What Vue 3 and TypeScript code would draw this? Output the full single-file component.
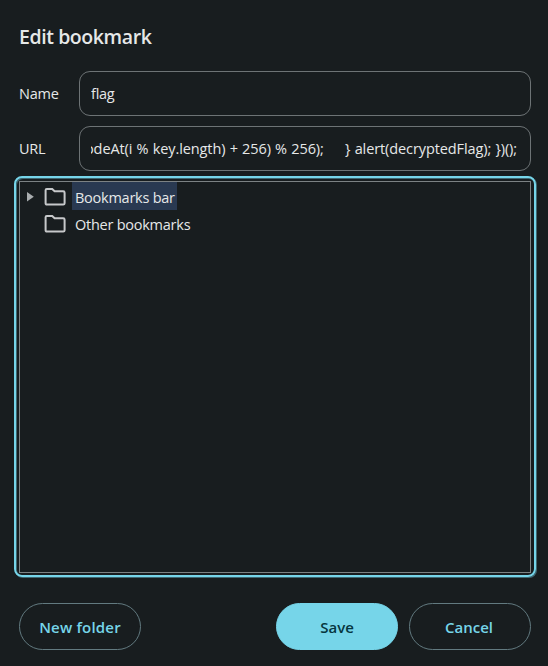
<script setup lang="ts">
import { ref } from 'vue'

interface Folder {
  title: string
  expandable: boolean
}

const name = ref('flag')
const url = ref('codeAt(i % key.length) + 256) % 256);     } alert(decryptedFlag); })();')
const selected = ref(0)
const folders: Folder[] = [
  { title: 'Bookmarks bar', expandable: true },
  { title: 'Other bookmarks', expandable: false },
]
</script>

<template>
  <main class="dialog">
    <h1 class="title">Edit bookmark</h1>
    <div class="row">
      <span class="label">Name</span>
      <div class="field"><div class="clip"><span>{{ name }}</span></div></div>
    </div>
    <div class="row">
      <span class="label">URL</span>
      <div class="field"><div class="clip end"><span class="url-value">{{ url }}</span></div></div>
    </div>
    <div class="tree">
      <div v-for="(folder, i) in folders" :key="folder.title" class="node" @click="selected = i">
        <svg class="arrow" viewBox="0 0 8 12"><path v-if="folder.expandable" d="M1 1 7.8 5.8 1 10.6z" /></svg>
        <svg class="folder" viewBox="0 0 22 18">
          <path d="M2.8 1H8.2L10.6 3.3H19.2Q20.6 3.3 20.6 4.7V15.2Q20.6 16.6 19.2 16.6H3Q1.6 16.6 1.6 15.2V2.3Q1.6 1 2.8 1Z" />
        </svg>
        <span class="node-title" :class="{ selected: selected === i }">{{ folder.title }}</span>
      </div>
    </div>
    <div class="actions">
      <button class="button new">New folder</button>
      <button class="button primary">Save</button>
      <button class="button cancel">Cancel</button>
    </div>
  </main>
</template>

<style>
body {
  background: #181d1f;
}
</style>

<style scoped>
.dialog {
  box-sizing: border-box;
  width: 548px;
  height: 666px;
  padding: 22px 17px 0 19px;
  overflow: hidden;
  background: #181d1f;
  color: #e6e8e8;
  font-family: "Open Sans", "Noto Sans", sans-serif;
  font-size: 14.5px;
  line-height: 20px;
  letter-spacing: -0.25px;
}
.title {
  margin: 0 0 19px;
  font-size: 19.5px;
  line-height: 30px;
  font-weight: 600;
  letter-spacing: -0.42px;
}
.row {
  display: flex;
  align-items: center;
  height: 45px;
  margin-bottom: 10px;
}
.label {
  width: 60px;
  flex: none;
}
.field {
  box-sizing: border-box;
  width: 452px;
  height: 45px;
  padding: 0 13px 0 11px;
  border: 1px solid #6d7375;
  border-radius: 11px;
}
.clip {
  display: flex;
  align-items: center;
  height: 43px;
  overflow: hidden;
  white-space: pre;
}
.end {
  justify-content: flex-end;
}
.url-value {
  letter-spacing: -0.1px;
  word-spacing: 0.6px;
}
.tree {
  position: relative;
  box-sizing: border-box;
  width: 512px;
  height: 392px;
  margin-bottom: 30px;
  padding-left: 6px;
  border: 1px solid #7c8284;
}
.tree::after {
  content: "";
  position: absolute;
  inset: -6px -6px -5px;
  border: 2px solid #76d5e9;
  border-radius: 8px;
  box-shadow: 1px 1px 0 #3f6771, inset 1px 1px 0 #3f6771;
  pointer-events: none;
}
.node {
  display: flex;
  align-items: flex-start;
  height: 27px;
}
.arrow {
  width: 8px;
  height: 12px;
  margin: 9px 10px 0 0;
  fill: #a9adaf;
}
.folder {
  width: 22px;
  height: 18px;
  margin: 5.5px 6px 0 0;
  fill: none;
  stroke: #c6c8ca;
  stroke-width: 2;
}
.node-title {
  height: 28px;
  padding: 0 2px 0 3px;
  line-height: 32px;
}
.selected {
  background: #293951;
}
.actions {
  display: flex;
}
.button {
  box-sizing: border-box;
  width: 122px;
  height: 47px;
  padding: 0;
  border: 1px solid #627a80;
  border-radius: 24px;
  background: transparent;
  color: #76d5e9;
  font: 600 15px/20px "Open Sans", "Noto Sans", sans-serif;
  letter-spacing: 0;
}
.new {
  letter-spacing: 0.2px;
}
.primary {
  margin-left: auto;
  margin-right: 11px;
  border-color: #76d5e9;
  background: #76d5e9;
  color: #06363f;
}
.cancel {
  padding-right: 2px;
}
</style>
